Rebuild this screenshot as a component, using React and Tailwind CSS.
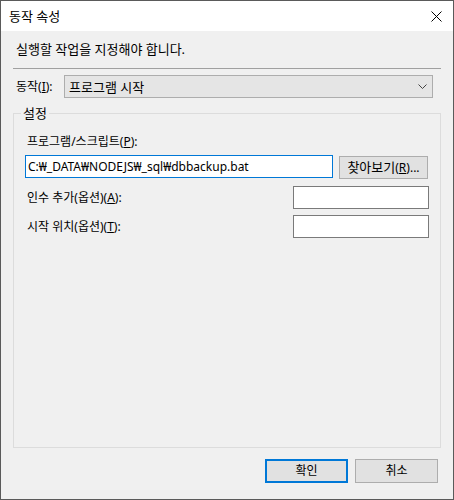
import React from 'react';

const font = { fontFamily: '"Noto Sans", "Noto Sans CJK KR", sans-serif' };

const CloseIcon = () => (
  <svg width="11" height="11" viewBox="0 0 11 11" className="block">
    <path d="M0.5 0.5 L10.5 10.5 M10.5 0.5 L0.5 10.5" stroke="#000" strokeWidth="1" fill="none" />
  </svg>
);

const Chevron = () => (
  <svg width="9" height="5" viewBox="0 0 9 5" className="block">
    <path d="M0.5 0.5 L4.5 4.5 L8.5 0.5" stroke="#444" strokeWidth="1" fill="none" />
  </svg>
);

const Field = ({ children }) => (
  <div className="flex h-[23px] items-center justify-between">
    <span className="pl-[2px] leading-[16px]">{children}</span>
    <div className="h-[23px] w-[136px] border border-[#7a7a7a] bg-white" />
  </div>
);

export default function App() {
  return (
    <div
      className="flex h-[500px] w-[454px] flex-col border border-[#5a5a5a] bg-[#f0f0f0] text-[12px] text-black"
      style={font}
    >
      {/* Title bar */}
      <div className="flex h-[30px] shrink-0 items-center justify-between bg-white pl-[8px] pr-[11px]">
        <span className="text-[13px] leading-[16px]">동작 속성</span>
        <CloseIcon />
      </div>

      <div className="flex flex-1 flex-col px-[12px]">
        <div className="mt-[9px] h-[18px] pl-[3px] text-[13px] leading-[18px]">실행할 작업을 지정해야 합니다.</div>
        <div className="mt-[10px] h-px bg-[#a0a0a0]" />

        {/* Action row */}
        <div className="mt-[6px] flex h-[23px] items-center">
          <span className="w-[51px] pl-[3px] leading-[16px]">
            동작(<u>I</u>):
          </span>
          <div className="flex h-[23px] w-[369px] items-center justify-between border border-[#adadad] bg-[#e5e5e5] pl-[4px] pr-[5px]">
            <span className="text-[13px] leading-[16px]">프로그램 시작</span>
            <Chevron />
          </div>
        </div>

        {/* Settings group */}
        <div className="relative mt-[15px] h-[335px] border border-[#dcdcdc] px-[11px]">
          <span className="absolute left-[7px] top-[-9px] bg-[#f0f0f0] px-[2px] text-[13px] leading-[16px]">설정</span>

          <div className="mt-[20px] h-[16px] pl-[2px] leading-[16px]">
            프로그램/스크립트(<u>P</u>):
          </div>
          <div className="mt-[5px] flex items-start justify-between">
            <div className="flex h-[23px] w-[308px] items-center border border-[#0078d7] bg-white pl-[2px]">
              <span className="leading-[16px]">C:₩_DATA₩NODEJS₩_sql₩dbbackup.bat</span>
            </div>
            <div className="mr-[1px] mt-[1px] flex h-[23px] w-[89px] items-center justify-center border border-[#adadad] bg-[#e1e1e1]">
              <span className="leading-[16px]">
                <span className="text-[13px]">찾아보기</span>(<u>R</u>)...
              </span>
            </div>
          </div>

          <div className="mt-[7px] flex flex-col gap-[6px]">
            <Field>
              인수 추가(옵션)(<u>A</u>):
            </Field>
            <Field>
              시작 위치(옵션)(<u>T</u>):
            </Field>
          </div>
        </div>

        {/* Buttons */}
        <div className="mr-[3px] mt-[11px] flex justify-end gap-[7px]">
          <div className="flex h-[24px] w-[83px] items-center justify-center border-2 border-[#0078d7] bg-[#e1e1e1]">
            <span className="leading-[16px]">확인</span>
          </div>
          <div className="flex h-[24px] w-[83px] items-center justify-center border border-[#adadad] bg-[#e1e1e1]">
            <span className="leading-[16px]">취소</span>
          </div>
        </div>
      </div>
    </div>
  );
}
